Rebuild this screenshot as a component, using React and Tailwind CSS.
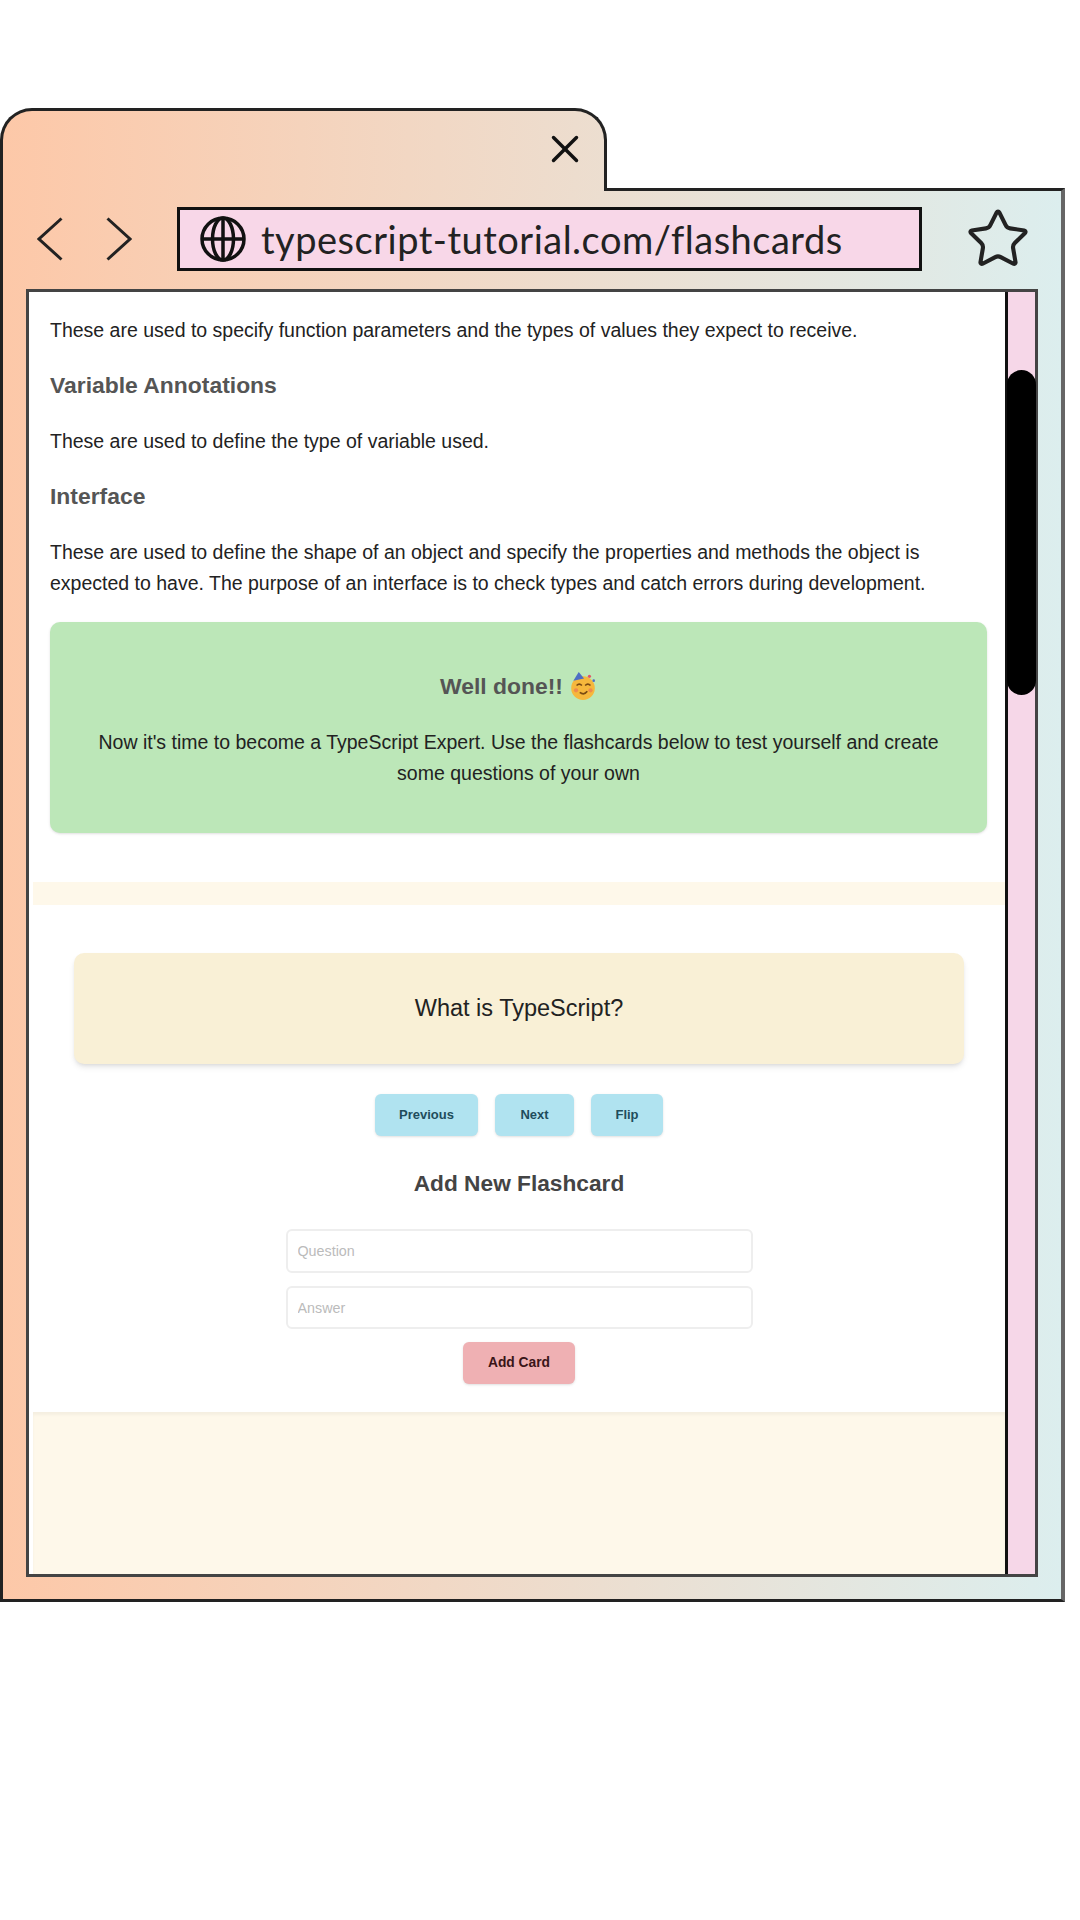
import { X, Star } from 'lucide-react'

const sans = 'font-["Liberation_Sans",Arial,sans-serif]'

function Globe() {
  return (
    <svg width="48" height="46" viewBox="0 0 48 46" fill="none" stroke="#111" strokeWidth="3.5">
      <circle cx="24" cy="23" r="21" />
      <ellipse cx="24" cy="23" rx="10.5" ry="21" />
      <path d="M24 2v42M3 23h42" />
    </svg>
  )
}

function Chevron({ left, className = '' }) {
  return (
    <svg width="26" height="44" viewBox="0 0 26 44" fill="none" stroke="#222" strokeWidth="3" className={className}>
      <path d={left ? 'M24.5 1.5 2 22 24.5 42.5' : 'M1.5 1.5 24 22 1.5 42.5'} />
    </svg>
  )
}

// party face, the emoji font is not available
function PartyFace() {
  return (
    <svg width="28" height="30" viewBox="0 0 26 28" className="inline-block">
      <circle cx="13" cy="16" r="11" fill="#f6b73c" />
      <path d="M4 9 L9 1 L14 7 Z" fill="#4d6fc4" />
      <circle cx="19" cy="5" r="1.5" fill="#e0566a" />
      <circle cx="23" cy="9" r="1.2" fill="#4d6fc4" />
      <path d="M7 13.5q2.5-2.5 5 0M15 13.5q2.5-2.5 5 0" stroke="#7a4a12" strokeWidth="1.5" fill="none" />
      <path d="M10 20q4 3 7-1" stroke="#7a4a12" strokeWidth="1.6" fill="none" />
      <circle cx="6.5" cy="18" r="2" fill="#ee8a4e" />
      <circle cx="20" cy="18" r="2" fill="#ee8a4e" />
    </svg>
  )
}

function Copy({ children, className = '' }) {
  return <p className={`text-[19.5px] leading-[31px] text-[#222] ${className}`}>{children}</p>
}

function Subhead({ children, className = '' }) {
  return <h3 className={`text-[22.9px] leading-[31px] font-bold text-[#555] ${className}`}>{children}</h3>
}

function SmallButton({ children, className = '' }) {
  return (
    <button className={`h-[42px] rounded-md bg-[#b0e3f0] text-[13px] font-bold text-[#1f4d5c] shadow-sm ${className}`}>
      {children}
    </button>
  )
}

export default function App() {
  return (
    <div className={`min-h-[1920px] bg-white pt-[108px] ${sans}`}>
      <div className="w-[1065px]">
        {/* tab */}
        <div className="relative z-10 -mb-[3px] flex h-[83px] w-[607px] items-start justify-end rounded-t-[32px] border-[3px] border-b-0 border-[#222] bg-gradient-to-r from-[#fdc8a8] to-[#dceeee] bg-[length:1065px_100%] pt-[15px] pr-[16px]">
          <X size={46} strokeWidth={1.8} className="text-[#111]" />
        </div>

        {/* window */}
        <div className="h-[1414px] border-[3px] border-r-[4px] border-[#222] border-r-[#666] bg-gradient-to-r from-[#fdc8a8] to-[#dceeee] pr-[23px] pb-[22px] pl-[23px]">
          <div className="flex h-[98px] items-center pb-[2px]">
            <div className="flex w-[151px] items-center">
              <Chevron left className="ml-[11px]" />
              <Chevron className="ml-[43px]" />
            </div>
            <div className="flex h-[64px] w-[745px] items-center gap-[14px] border-[3px] border-[#111] bg-[#f8d7e8] pl-[19px]">
              <Globe />
              <span className="font-['Lato',sans-serif] text-[38px] leading-none tracking-[0.5px] text-[#222]">
                typescript-tutorial.com/flashcards
              </span>
            </div>
            <Star size={66} strokeWidth={1.5} className="ml-[43px] text-[#222]" />
          </div>

          {/* content frame */}
          <div className="flex h-[1288px] border-[3px] border-[#444] bg-white">
            <div className="flex min-w-0 flex-1 flex-col">
              <div className="pt-[23px] pr-[18px] pl-[21px]">
                <Copy>These are used to specify function parameters and the types of values they expect to receive.</Copy>
                <Subhead className="mt-[24px]">Variable Annotations</Subhead>
                <Copy className="mt-[25px]">These are used to define the type of variable used.</Copy>
                <Subhead className="mt-[24px]">Interface</Subhead>
                <Copy className="mt-[25px]">
                  These are used to define the shape of an object and specify the properties and methods the object is expected to have. The purpose of an interface is to check types and catch errors during development.
                </Copy>

                <div className="mt-[23px] flex h-[211px] flex-col items-center rounded-[10px] bg-[#bce7b8] px-[40px] pt-[47px] text-center shadow-sm">
                  <h2 className="flex items-center gap-[6px] text-[22.9px] leading-[34px] font-bold text-[#555]">
                    Well done!! <PartyFace />
                  </h2>
                  <Copy className="mt-[24px]">
                    Now it's time to become a TypeScript Expert. Use the flashcards below to test yourself and create some questions of your own
                  </Copy>
                </div>
              </div>

              <div className="mt-[49px] ml-[4px] h-[23px] bg-[#fef8ea]" />

              <div className="flex h-[507px] flex-col items-center pt-[48px] pr-[41px] pl-[45px]">
                <div className="flex h-[111px] w-full items-center justify-center rounded-[10px] bg-[#f9f0d6] text-[23.5px] text-[#222] shadow-md">
                  What is TypeScript?
                </div>
                <div className="mt-[30px] flex gap-[17px]">
                  <SmallButton className="w-[103px]">Previous</SmallButton>
                  <SmallButton className="w-[79px]">Next</SmallButton>
                  <SmallButton className="w-[72px]">Flip</SmallButton>
                </div>
                <h3 className="mt-[31px] text-[22.7px] leading-[32px] font-bold text-[#444]">Add New Flashcard</h3>
                <input
                  placeholder="Question"
                  className="mt-[30px] h-[44px] w-[467px] rounded-md border-2 border-[#eee] bg-white px-[10px] text-[14.3px] placeholder:text-[#bbb]"
                />
                <input
                  placeholder="Answer"
                  className="mt-[13px] h-[43px] w-[467px] rounded-md border-2 border-[#eee] bg-white px-[10px] text-[14.3px] placeholder:text-[#bbb]"
                />
                <button className="mt-[13px] h-[42px] w-[112px] rounded-md bg-[#efb0b3] text-[13.8px] font-bold text-[#3a1518] shadow-sm">
                  Add Card
                </button>
              </div>

              <div className="ml-[4px] flex-1 bg-[#fef8ea] shadow-[inset_0_3px_3px_rgba(0,0,0,0.04)]" />
            </div>

            {/* scrollbar */}
            <div className="w-[30px] shrink-0 border-l-[3px] border-[#111] bg-[#f6d7e8] pt-[78px]">
              <div className="-ml-[1px] h-[325px] w-[29px] rounded-full bg-black" />
            </div>
          </div>
        </div>
      </div>
    </div>
  )
}
